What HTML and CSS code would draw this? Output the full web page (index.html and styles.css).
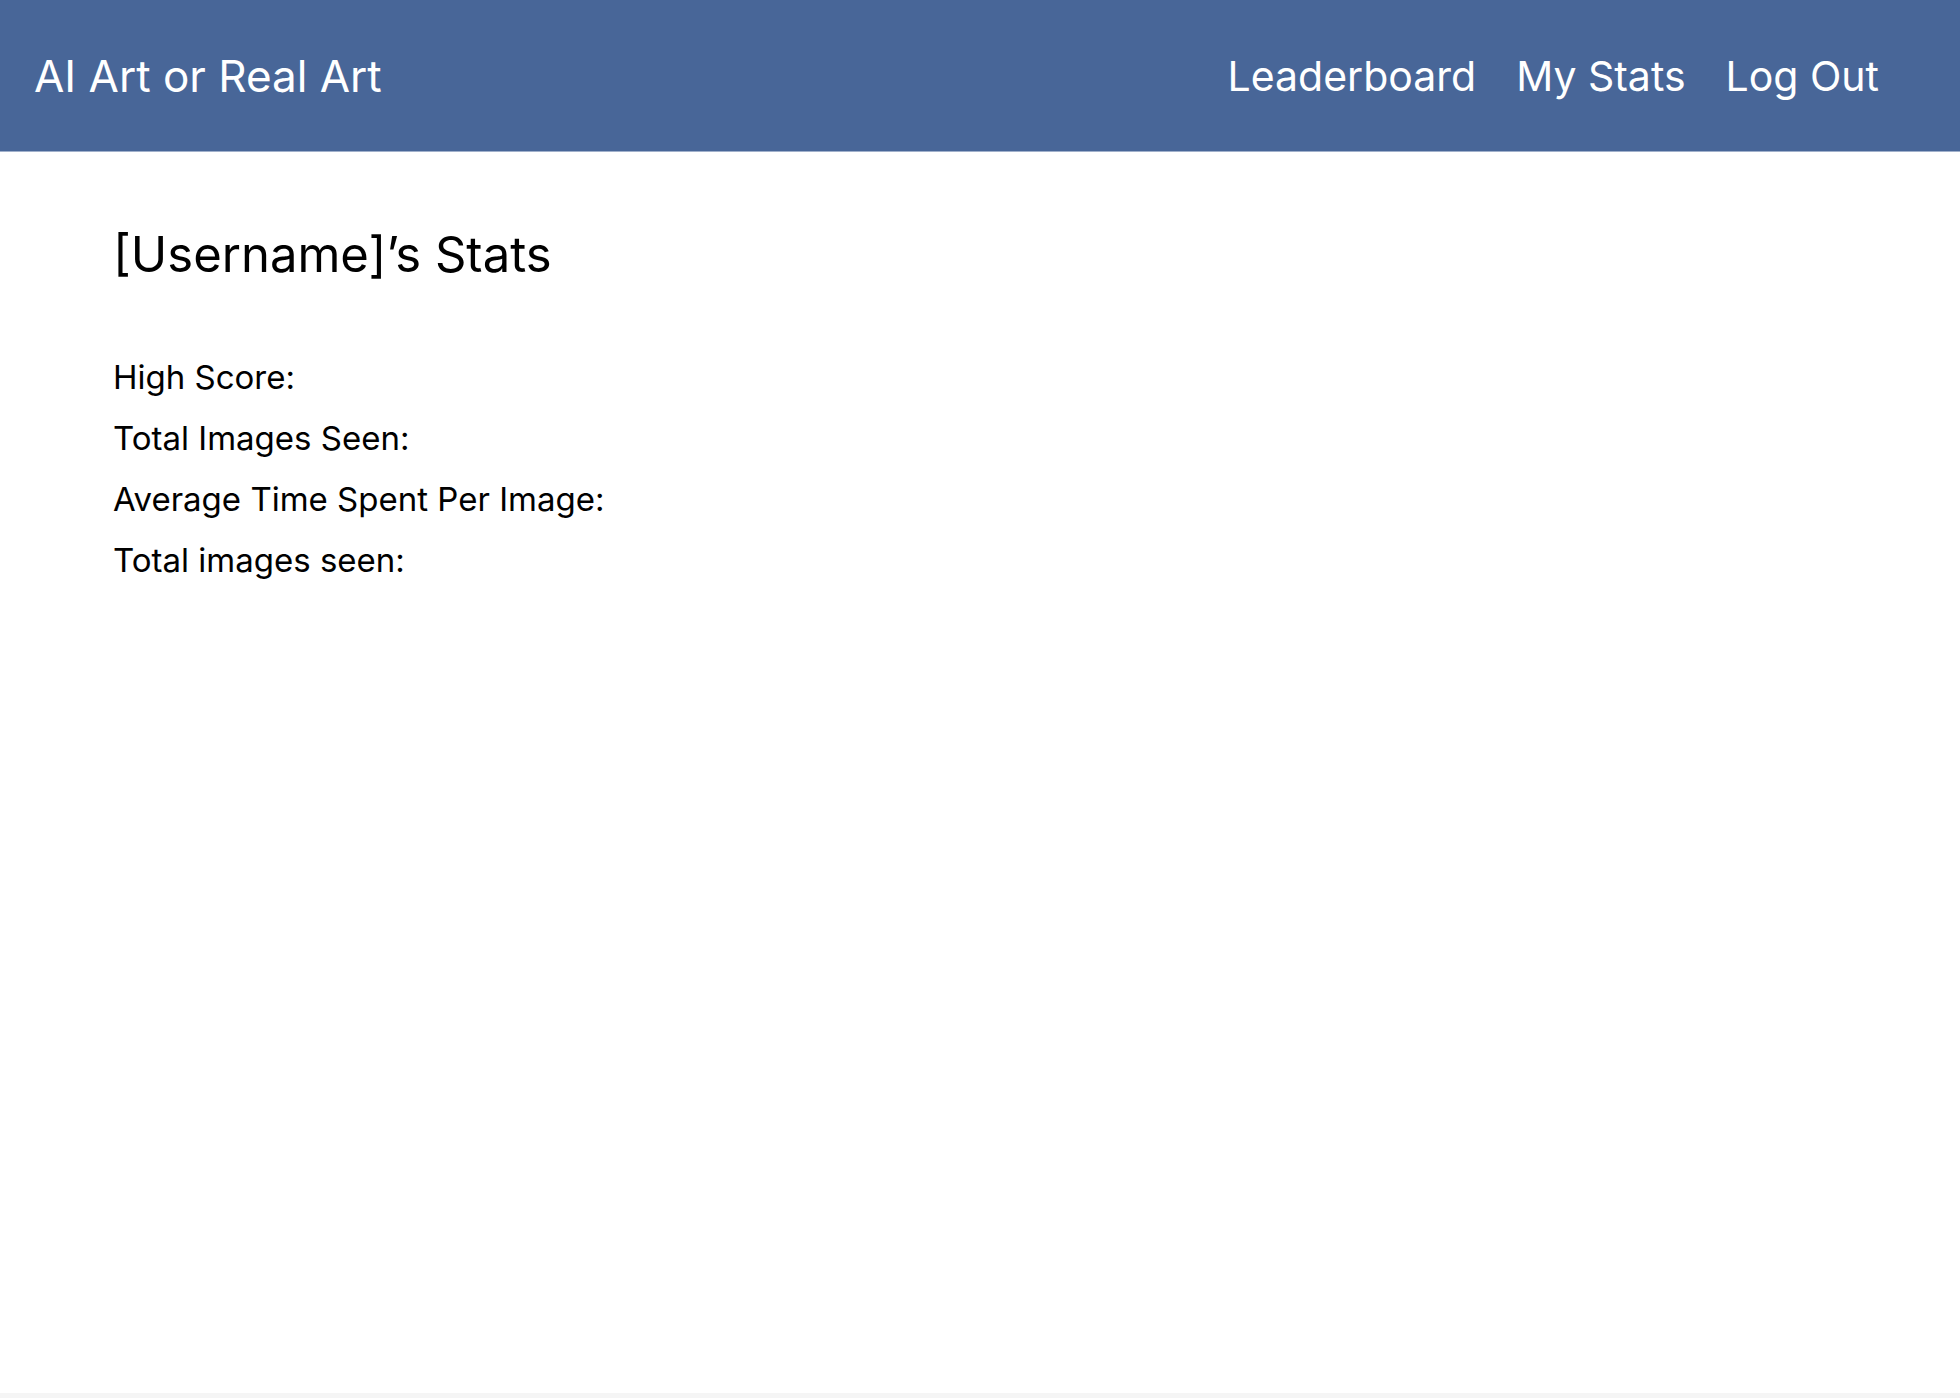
FILE: index.html
```
<!DOCTYPE html>
<html lang="en">
<head>
<meta charset="utf-8">
<title>AI Art or Real Art</title>
<link rel="stylesheet" href="styles.css">
</head>
<body>
<header class="header">
  <a class="brand" href="#">AI Art or Real Art</a>
  <nav class="nav">
    <a href="#">Leaderboard</a>
    <a href="#">My Stats</a>
    <a href="#">Log Out</a>
  </nav>
</header>
<main class="content">
  <h1 class="title">[Username]’s Stats</h1>
  <ul class="stats">
    <li>High Score:</li>
    <li>Total Images Seen:</li>
    <li>Average Time Spent Per Image:</li>
    <li>Total images seen:</li>
  </ul>
</main>
<footer class="footer"></footer>
</body>
</html>
```

FILE: styles.css
```
* {
  box-sizing: border-box;
}

body {
  display: flex;
  flex-direction: column;
  min-height: 100vh;
  margin: 0;
  background: #fff;
  color: #000;
  font-family: Inter, "Liberation Sans", sans-serif;
  font-weight: 370;
}

.header {
  display: flex;
  align-items: center;
  justify-content: space-between;
  padding: 48px 81px 47px 34px;
  border-bottom: 1px solid #a0b0cb;
  background: #486698;
  color: #fff;
}

.header a {
  color: inherit;
  text-decoration: none;
}

.brand {
  font-size: 44px;
  line-height: 56px;
}

.nav {
  display: flex;
  gap: 40px;
  font-size: 41px;
  line-height: 56px;
}

.content {
  flex: 1;
  padding: 73px 113px;
}

.title {
  margin: 0 0 72px;
  font-size: 49px;
  font-weight: inherit;
  line-height: 60px;
}

.stats {
  display: grid;
  gap: 21px;
  margin: 0;
  padding: 0;
  font-size: 33px;
  line-height: 40px;
  list-style: none;
}

.footer {
  height: 5px;
  background: #f5f5f5;
}
```
